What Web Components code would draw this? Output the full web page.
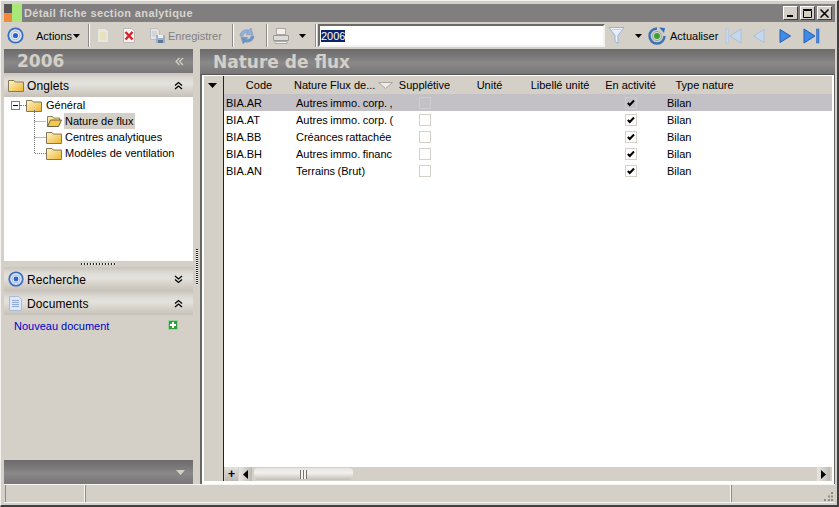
<!DOCTYPE html>
<html lang="fr"><head><meta charset="utf-8"><title>Détail fiche section analytique</title>
<style>
html,body{margin:0;padding:0;background:#d4d0c8;overflow:hidden}
body{font:11px "Liberation Sans",Arial,sans-serif;color:#000}
</style></head><body>
<x-window>
  <x-titlebar slot="title">Détail fiche section analytique</x-titlebar>
  <x-toolbar slot="tools"></x-toolbar>
  <x-sidepanel slot="side"></x-sidepanel>
  <x-content slot="main"></x-content>
  <x-statusbar slot="status"></x-statusbar>
</x-window>
<script>
const I={
 target:(s=17)=>`<svg width="${s}" height="${s}" viewBox="0 0 17 17"><circle cx="8.5" cy="8.5" r="7.2" fill="#d8e4f6" stroke="#3a6cc0" stroke-width="1.8"/><circle cx="8.5" cy="8.5" r="4.2" fill="#eef3fb" stroke="#9db8e4"/><circle cx="8.5" cy="8.5" r="2.6" fill="#2f62c4"/></svg>`,
 caret:()=>`<svg width="8" height="4" viewBox="0 0 8 4" style="display:block"><path d="M0 0h7L3.500 4z" fill="#000"/></svg>`,
 doc:()=>`<svg width="14" height="17" viewBox="0 0 14 17"><path d="M1.500 1.500h8l3 3v11h-11z" fill="#e8e6e0" stroke="#cfcdc6"/><path d="M4 6h6M4 8h6M4 10h6M4 12h6" stroke="#e5dd96"/></svg>`,
 del:()=>`<svg width="14" height="17" viewBox="0 0 14 17"><path d="M1.500 1.500h8l3 3v11h-11z" fill="#f4f2f0" stroke="#bdbab5"/><path d="M3.500 5l7 7.500M10.500 5l-7 7.500" stroke="#d8232a" stroke-width="2.400"/></svg>`,
 save:()=>`<svg width="17" height="17" viewBox="0 0 17 17"><path d="M1.500 1.500h7l2 2v9h-9z" fill="#e4e3e0" stroke="#bdbcc0"/><path d="M3 5h5M3 7h5M3 9h5" stroke="#c5c5cc"/><rect x="7" y="8" width="9" height="8" fill="#9eb0c6"/><rect x="9" y="8" width="5" height="3" fill="#eef0f2"/><rect x="9" y="13" width="5" height="3" fill="#5d7696"/></svg>`,
 refresh:()=>`<svg width="18" height="18" viewBox="0 0 18 18"><path d="M2 9C2 5 6 2 11 3l2-2 2 7-7-.5 2-2C7 5 5 7 5 9z" fill="#8fb0dc" stroke="#7e96ba" stroke-width=".6"/><path d="M16 9c0 4-4 7-9 6l-2 2-2-7 7 .5-2 2c3 .5 5-1.500 5-3.500z" fill="#6f93c4" stroke="#7e96ba" stroke-width=".6"/></svg>`,
 printer:()=>`<svg width="18" height="18" viewBox="0 0 18 18"><rect x="4.500" y="1.500" width="9" height="6" fill="#f2f1ee" stroke="#a9a8a6"/><path d="M1.500 8.500h15v5h-15z" fill="#dcdbd8" stroke="#9a9a98"/><path d="M3 14.500h12v2H3z" fill="#f4f4f2" stroke="#a9a8a6"/></svg>`,
 funnel:()=>`<svg width="17" height="19" viewBox="0 0 17 19"><path d="M1 1.500h15L10 9.500v8l-3-2v-6z" fill="#eaf0f8" stroke="#9ab4d4"/><path d="M4 3.500h9" stroke="#c3d4e8"/></svg>`,
 reload:()=>`<svg width="18" height="18" viewBox="0 0 18 18"><path d="M9 1.500a7.500 7.500 0 1 0 7.500 7.500" fill="none" stroke="#3b6fb8" stroke-width="2.400"/><path d="M11 0.500l6 .5-1 5z" fill="#3b6fb8"/><circle cx="9" cy="9" r="4.600" fill="#cfd9cf" stroke="#8fa8a8"/><circle cx="9" cy="9" r="3" fill="#3fa02e"/></svg>`,
 first:(c,e)=>`<svg width="17" height="16" viewBox="0 0 17 16"><rect x="1" y="1" width="2.500" height="14" fill="${c}" stroke="${e}" stroke-width=".5"/><path d="M16 1v14L5 8z" fill="${c}" stroke="${e}"/></svg>`,
 prev:(c,e)=>`<svg width="13" height="16" viewBox="0 0 13 16"><path d="M12 1.500v13L1.500 8z" fill="${c}" stroke="${e}"/></svg>`,
 next:(c,e)=>`<svg width="13" height="16" viewBox="0 0 13 16"><path d="M1 1.500v13L11.500 8z" fill="${c}" stroke="${e}"/></svg>`,
 last:(c,e)=>`<svg width="17" height="16" viewBox="0 0 17 16"><path d="M1 1v14L12 8z" fill="${c}" stroke="${e}"/><rect x="13.500" y="1" width="2.500" height="14" fill="${c}" stroke="${e}" stroke-width=".5"/></svg>`,
 folder:(open)=>open
  ?`<svg width="16" height="13" viewBox="0 0 16 13" style="display:block"><path d="M1.500 11.500V1.500h5l1 1.500h6v2" fill="#f8e9a8" stroke="#8a7f5c"/><path d="M1.500 11.500l3-6.500h11l-3 6.500z" fill="#f5c94e" stroke="#6d6140"/></svg>`
  :`<svg width="16" height="13" viewBox="0 0 16 13" style="display:block"><defs><linearGradient id="f" x1="0" y1="0" x2="1" y2="1"><stop offset="0" stop-color="#fdf6c8"/><stop offset="1" stop-color="#eeb432"/></linearGradient></defs><path d="M.5 12.500V1.500h5.500l1.200 1.500h8.300v9.500z" fill="url(#f)" stroke="#85795a"/></svg>`,
 chevUp:(c='#000')=>`<svg width="9" height="9" viewBox="0 0 9 9" fill="none" stroke="${c}" stroke-width="1.300"><path d="M1 4.500l3.500-3 3.500 3M1 8l3.500-3L8 8"/></svg>`,
 chevDown:(c='#000')=>`<svg width="9" height="9" viewBox="0 0 9 9" fill="none" stroke="${c}" stroke-width="1.300"><path d="M1 1l3.500 3L8 1M1 4.500l3.500 3 3.500-3"/></svg>`,
 chevL:(c='#d4d0c8')=>`<svg width="9" height="9" viewBox="0 0 9 9" fill="none" stroke="${c}" stroke-width="1.200"><path d="M4.500 1l-3.500 3.500 3.500 3.500M8 1L4.500 4.500 8 8"/></svg>`,
 page:()=>`<svg width="15" height="17" viewBox="0 0 15 17"><path d="M1.500 1.500h9l3 3v11h-12z" fill="#dfe8f8" stroke="#a9bbdc"/><path d="M4 5.500h7M4 7.500h7M4 9.500h7M4 11.500h7" stroke="#8fa8d8"/></svg>`,
 check:()=>`<svg width="10" height="10" viewBox="0 0 10 10" style="display:block"><path d="M1.800 5l2 2L8 2.500" fill="none" stroke="#000" stroke-width="2"/></svg>`
};
function tpl(css,html){const t=document.createElement('template');t.innerHTML=`<style>${css}</style>${html}`;return t}
function def(name,css,html,after){
  const t=tpl(css,html);
  customElements.define(name,class extends HTMLElement{
    constructor(){super();this.attachShadow({mode:'open'}).appendChild(t.content.cloneNode(true));}
    connectedCallback(){if(after&&!this._d){this._d=1;after(this,this.shadowRoot)}}
  });
}
const DARK='linear-gradient(#6c6a6a 0,#7a7878 30%,#8a8888 55%,#787676 100%)';
const LIGHT='linear-gradient(#c9c5bd 0,#dedbd5 25%,#e4e2dd 45%,#d4d0c8 75%,#c6c2ba 100%)';

def('x-window',`
 :host{display:grid;box-sizing:border-box;width:839px;height:507px;background:#d4d0c8;
  border-top:1px solid #f4f3f0;border-left:1px solid #f4f3f0;border-right:2px solid #404040;border-bottom:2px solid #404040;
  padding:3px 2px 0 3px;grid-template-columns:189px 7px 635px;grid-template-rows:18px 27px 435px 21px;}
 ::slotted([slot=title]),::slotted([slot=tools]),::slotted([slot=status]){grid-column:1/4}
 .split{display:flex;align-items:center;justify-content:center}
 .split i{display:block;width:2px;height:36px;margin-bottom:0;background:repeating-linear-gradient(#222 0 1px,#f4f4f4 1px 2px)}
`,`<slot name="title"></slot><slot name="tools"></slot><slot name="side"></slot><div class="split"><i></i></div><slot name="main"></slot><slot name="status"></slot>`);

def('x-titlebar',`
 :host{display:flex;align-items:center;background:#807e7e;color:#d8d5cf;font:bold 11px "Liberation Sans",sans-serif;letter-spacing:.36px;height:18px}
 .logo{width:18px;height:18px;display:grid;grid-template-columns:8px 10px;grid-template-rows:9px 9px;margin-right:2px}
 .logo i:nth-child(1){background:#555}.logo i:nth-child(2){background:#a8e878;grid-row:1/3;grid-column:2}.logo i:nth-child(3){background:#f08a3c}
 .t{flex:1}
 .btns{display:flex;gap:2px;margin-right:3px}
 .b{width:15px;height:14px;box-sizing:border-box;background:#d4d0c8;border:1px solid;border-color:#fff #404040 #404040 #fff;display:flex;align-items:center;justify-content:center}
`,`<div class="logo"><i></i><i></i><i></i></div><div class="t"><slot></slot></div><div class="btns">
 <div class="b"><svg width="9" height="9"><rect x="1" y="6" width="6" height="2"/></svg></div>
 <div class="b"><svg width="11" height="10"><path d="M1.500 2.500h8v7h-8zM1 1.500h9" fill="none" stroke="#000"/></svg></div>
 <div class="b"><svg width="9" height="9"><path d="M.5.500l8 8M8.500.500l-8 8" stroke="#000" stroke-width="1.500"/></svg></div></div>`);

def('x-toolbar',`
 :host{display:flex;align-items:center;height:27px;background:#d4d0c8;font-size:11px}
 .i{display:flex;align-items:center;flex:none;white-space:nowrap}
 .sep{width:1px;height:23px;background:#8e8c88;border-right:1px solid #fff;flex:none}
 .g{color:#808080}
 input{font:11px "Liberation Sans",sans-serif;flex:none;box-sizing:border-box;width:287px;height:23px;border:2px solid;border-color:#6c6a66 #f4f3f0 #f4f3f0 #6c6a66;padding:0 0 0 1px;margin:0;background:#fff;outline:none}
 input::selection{background:#0a246a;color:#fff}
`,`
 <span class="i" style="margin-left:3px">${I.target()}</span>
 <span class="i" style="margin-left:12px;width:36px">Actions</span><span class="i" style="margin-left:1px">${I.caret()}</span>
 <span class="sep" style="margin-left:7px"></span>
 <span class="i" style="margin-left:6px">${I.doc()}</span>
 <span class="i" style="margin-left:12px">${I.del()}</span>
 <span class="i" style="margin-left:13px">${I.save()}</span>
 <span class="i g" style="margin-left:2px;width:54px">Enregistrer</span>
 <span class="sep" style="margin-left:10px"></span>
 <span class="i" style="margin-left:4px">${I.refresh()}</span>
 <span class="sep" style="margin-left:10px"></span>
 <span class="i" style="margin-left:4px">${I.printer()}</span>
 <span class="i" style="margin-left:9px">${I.caret()}</span>
 <span class="sep" style="margin-left:8px"></span>
 <input id="q" value="2006" style="margin-left:1px">
 <span class="i" style="margin-left:3px">${I.funnel()}</span>
 <span class="i" style="margin-left:10px">${I.caret()}</span>
 <span class="i" style="margin-left:5px">${I.reload()}</span>
 <span class="i" style="margin-left:4px;width:48px">Actualiser</span>
 <span class="i" style="margin-left:7px">${I.first('#c6d8ee','#a8c0de')}</span>
 <span class="i" style="margin-left:10px">${I.prev('#c6d8ee','#a8c0de')}</span>
 <span class="i" style="margin-left:14px">${I.next('#3c8ce8','#2a5cb0')}</span>
 <span class="i" style="margin-left:11px">${I.last('#3c8ce8','#2a5cb0')}</span>
`,(h,s)=>{const q=s.getElementById('q');q.focus();q.select();});

def('x-dark',`
 :host{display:flex;align-items:center;background:${DARK};color:#d4d0c8;font:bold 17px "DejaVu Sans",sans-serif;height:24px;box-sizing:border-box;padding-left:13px;flex:none}
 .t{flex:1;line-height:24px;white-space:nowrap}
`,`<div class="t"><slot></slot></div><slot name="end"></slot>`);

def('x-band',`
 :host{display:flex;align-items:center;height:24px;background:${LIGHT};font-size:12px;box-sizing:border-box;padding-left:4px;color:#000;flex:none}
 .ic{width:19px;display:flex;flex:none}
 .t{flex:1;letter-spacing:.1px;padding-top:1px}
 .ch{width:9px;margin-right:10px;display:flex}
`,`<span class="ic"><slot name="icon"></slot></span><span class="t"><slot></slot></span><span class="ch"><slot name="end"></slot></span>`);

def('x-tree-item',`
 :host{display:flex;align-items:center;height:16px;padding-left:30px}
 .lines{width:12px;height:16px;flex:none;display:block;overflow:visible}
 .f{margin-right:2px;flex:none;width:16px}
 .t{padding:0 2px 0 1px;line-height:16px;white-space:nowrap}
 :host([selected]) .t{background:#d4d0c8}
`,`<svg class="lines" viewBox="0 0 12 16"><path id="p" stroke="#777" stroke-dasharray="1 1" fill="none"/></svg><span class="f"></span><span class="t"><slot></slot></span>`,
 (h,s)=>{s.getElementById('p').setAttribute('d',h.hasAttribute('last')?'M.5 -3v11.500H12':'M.5 -3v19M.5 8.500H12');
  s.querySelector('.f').innerHTML=I.folder(h.hasAttribute('selected'));});

def('x-tree',`
 :host{display:block;background:#fff;height:164px;box-sizing:border-box;flex:none}
 .root{display:flex;align-items:center;height:16px;padding-left:7px}
 .box{width:9px;height:9px;box-sizing:border-box;border:1px solid #808080;flex:none;display:flex;align-items:center;justify-content:center}
 .box i{display:block;width:5px;height:1px;background:#000}
 .dot{width:6px;height:0;border-top:1px dotted #777;flex:none}
 .f{flex:none;margin-right:4px;width:16px}
`,`<div class="root"><span class="box"><i></i></span><span class="dot"></span><span class="f">${I.folder(false)}</span>Général</div>
 <div><x-tree-item selected>Nature de flux</x-tree-item><x-tree-item>Centres analytiques</x-tree-item><x-tree-item last>Modèles de ventilation</x-tree-item></div>`);

def('x-sidepanel',`
 :host{display:flex;flex-direction:column;min-height:0;height:435px}
 .g{height:6px;display:flex;align-items:center;justify-content:center;flex:none}
 .g i{display:block;width:36px;height:2px;background:repeating-linear-gradient(90deg,#222 0 1px,#eee 1px 2px,transparent 2px 3px)}
 .doc{flex:1;padding:5px 10px 0 10px;display:flex;justify-content:space-between;align-items:flex-start;color:#0000c8;font-size:11px;line-height:13px}
 .plus{width:10px;height:10px;background:#2f9e3c;border:1px solid #9ed0a0;box-sizing:border-box;margin:0 5px 0 0;position:relative;display:block}
 .plus::before{content:"";position:absolute;left:1px;top:3px;width:6px;height:2px;background:#fff}
 .plus::after{content:"";position:absolute;left:3px;top:1px;width:2px;height:6px;background:#fff}
 .foot{height:24px;flex:none;background:${DARK};display:flex;align-items:center;justify-content:flex-end;padding-right:8px}
 .foot svg{display:block}
`,`<x-dark>2006<span slot="end" style="margin-right:9px;display:flex">${I.chevL()}</span></x-dark>
 <x-band><span slot="icon" style="display:flex">${I.folder(false)}</span>Onglets<span slot="end" style="display:flex">${I.chevUp()}</span></x-band>
 <x-tree></x-tree>
 <div class="g"><i></i></div>
 <x-band><span slot="icon" style="display:flex">${I.target(16)}</span>Recherche<span slot="end" style="display:flex">${I.chevDown()}</span></x-band>
 <x-band><span slot="icon" style="display:flex">${I.page()}</span>Documents<span slot="end" style="display:flex">${I.chevUp()}</span></x-band>
 <div class="doc"><span>Nouveau document</span><span class="plus"></span></div>
 <div class="foot"><svg width="9" height="5"><path d="M0 0h9L4.500 5z" fill="#d4d0c8"/></svg></div>`);

def('x-content',`
 :host{display:flex;flex-direction:column;height:435px;min-height:0}
 x-dark{height:25px}
`,`<x-dark>Nature de flux</x-dark><x-grid></x-grid>`);

const COLS='70px 102px 57px 73px 68px 73px 75px 1fr';
const ROWS=[['BIA.AR','Autres immo. corp. ,'],['BIA.AT','Autres immo. corp. ('],['BIA.BB','Créances rattachée'],['BIA.BH','Autres immo. financ'],['BIA.AN','Terrains (Brut)']];
def('x-grid',`
 :host{display:flex;flex:1;min-height:0;box-sizing:border-box;border-left:2px solid #666;border-right:1px solid #666;border-top:1px solid #555;padding:1px 2px 3px 2px;background:#fff}
 .ind{width:16px;border-right:1px solid #222;background:#d4d0c8;flex:none;display:flex;justify-content:center;padding:7px 3px 0 0;box-sizing:content-box}
 .body{flex:1;min-width:0;display:flex;flex-direction:column}
 .head,.row{display:grid;grid-template-columns:${COLS};align-items:center}
 .head{height:18px;background:#d4d0c8;flex:none}
 .head span{text-align:center;white-space:nowrap;display:flex;align-items:center;justify-content:center;gap:3px}
 .row{height:17px;background:#fff}
 .row.sel{background:#c4c1c6}
 .c{padding-left:2px;white-space:nowrap;word-spacing:-.6px}
 .cb{width:12px;height:12px;box-sizing:border-box;border:1px solid #d4d0c8;background:#fff;justify-self:center;display:flex;align-items:center;justify-content:center}
 .sel .cb{background:#c4c1c6;border-color:#cfccd0}
 .fill{flex:1}
 .bar{height:14px;flex:none;display:flex;background:#d4d0c8}
 .plus{width:13px;margin:0 1px 0 1px;background:linear-gradient(#e4e2de,#bdb9b2);display:flex;align-items:center;justify-content:center;font:bold 12px "Liberation Sans",sans-serif;line-height:1}
 .btn{width:13px;background:linear-gradient(90deg,#e8e6e2,#bdb9b2);display:flex;align-items:center;justify-content:center;flex:none}
 .thumb{width:99px;margin:1px 0 1px 2px;border-radius:4px;background:linear-gradient(#e6e4e0,#f2f1ee 40%,#c4c0b8);display:flex;align-items:center;justify-content:center;flex:none}
 .thumb i{display:block;width:7px;height:9px;background:repeating-linear-gradient(90deg,#77746e 0 1px,#f4f4f2 1px 3px)}
 .track{flex:1}
 .btn.r{margin-right:2px}
`,`<div class="ind"><svg width="9" height="5" style="display:block"><path d="M0 0h9L4.500 5z" fill="#000"/></svg></div>
 <div class="body">
  <div class="head"><span>Code</span><span style="justify-content:flex-start">Nature Flux de...<svg width="15" height="7" style="flex:none"><path d="M.5.5h14L7.500 6.500z" fill="#eeece8" stroke="#aaa7a0"/></svg></span><span>Supplétive</span><span>Unité</span><span>Libellé unité</span><span>En activité</span><span>Type nature</span><span></span></div>
  <div id="rows"></div><div class="fill"></div>
  <div class="bar"><div class="plus">+</div><div class="btn"><svg width="5" height="9"><path d="M5 0v9L0 4.500z"/></svg></div><div class="thumb"><i></i></div><div class="track"></div><div class="btn r"><svg width="5" height="9"><path d="M0 0v9l5-4.500z"/></svg></div></div>
 </div>`,
 (h,s)=>{s.getElementById('rows').innerHTML=ROWS.map((r,i)=>`<div class="row${i?'':' sel'}"><div class="c">${r[0]}</div><div class="c">${r[1]}</div><div class="cb"></div><div></div><div></div><div class="cb">${I.check()}</div><div class="c" style="padding-left:0">Bilan</div><div></div></div>`).join('');});

def('x-statusbar',`
 :host{display:flex;height:21px;box-sizing:border-box;border-top:1px solid #f6f5f2;padding-bottom:3px;background:linear-gradient(#d4d0c8,#d4d0c8) no-repeat top/100% 17px,linear-gradient(#f6f5f2,#f6f5f2) no-repeat 0 17px/100% 1px,#d4d0c8}
 .c{box-sizing:border-box;height:17px;border-right:1px solid #f6f5f2}
 .a{width:80px;margin-left:1px;border-left:1px solid #8e8c88}
 .b{flex:1;border-left:1px solid #8e8c88}
 .d{width:104px;border-left:1px solid #8e8c88;border-right:0;display:flex;justify-content:flex-end;align-items:flex-end}
 svg{display:block;margin:0 1px 0 0}
`,`<div class="c a"></div><div class="c b"></div><div class="c d"><svg width="12" height="11"><path d="M9 1h2v2H9zM6 4.500h2v2H6zM9 4.500h2v2H9zM2 8h2v2H2zM6 8h2v2H6zM9 8h2v2H9z" fill="#8e8c88"/></svg></div>`);
</script>
</body></html>
